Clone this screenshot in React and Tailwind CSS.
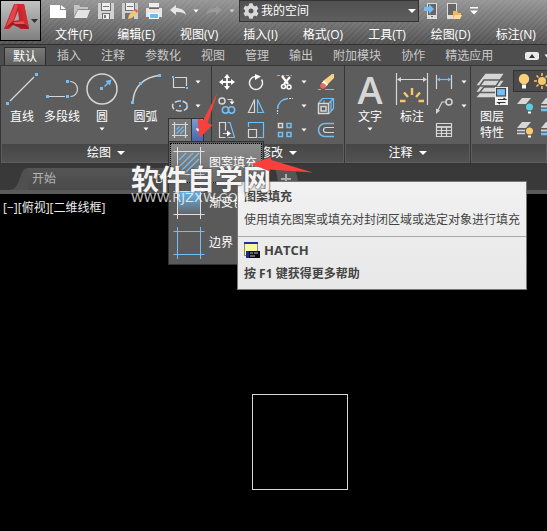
import React from 'react';
import { FaCog } from 'react-icons/fa';

const BLUE = '#73bff5';
const LIGHT = '#d6d6d6';

const menus = ['文件(F)', '编辑(E)', '视图(V)', '插入(I)', '格式(O)', '工具(T)', '绘图(D)', '标注(N)'];
const tabs = ['默认', '插入', '注释', '参数化', '视图', '管理', '输出', '附加模块', '协作', '精选应用'];

const Caret = ({ className = '' }) => (
  <svg viewBox="0 0 6 4" className={`w-[6px] h-[4px] shrink-0 ${className}`}>
    <path d="M0.500 0.500h5L3 3.500z" fill="#fff" />
  </svg>
);

/* 32px icons for the tall ribbon buttons */
const Big = ({ children }) => (
  <svg viewBox="0 0 32 32" className="w-8 h-8 overflow-visible" fill="none" stroke={LIGHT} strokeWidth="1.200">{children}</svg>
);

const Dot = ({ x, y, s = 3 }) => (
  <rect x={x - s / 2} y={y - s / 2} width={s} height={s} fill={BLUE} stroke="none" />
);

const LineIcon = () => (
  <Big><path d="M4 28L28 4" /><Dot x={1.500} y={30.500} /><Dot x={30.500} y={1.500} /></Big>
);
const PolylineIcon = () => (
  <Big>
    <path d="M3 23.500h16M24 8.500c4 0 7.500 3 7.500 7.500s-3 7.500-7 7.500" />
    <Dot x={1.500} y={23.500} /><Dot x={21.500} y={23.500} /><Dot x={21.500} y={8.500} />
  </Big>
);
const CircleIcon = () => (
  <Big>
    <circle cx="16" cy="16" r="15" strokeWidth="1.500" /><Dot x={15.500} y={15.500} />
    <path d="M18.500 13.500l4-4" stroke={BLUE} strokeWidth="1.500" /><path d="M25.500 6.500L24 12.500 19.500 8z" fill={BLUE} stroke="none" />
  </Big>
);
const ArcIcon = () => (
  <Big>
    <path d="M3 28C4 14 14 4 29 2.500" strokeWidth="1.500" /><Dot x={2.500} y={29.500} /><Dot x={10.500} y={10.500} /><Dot x={29.500} y={2.500} />
  </Big>
);
const TextIcon = () => (
  <span className="h-8 flex items-center font-['Open_Sans',sans-serif] font-semibold text-[38px] leading-8 text-[#d6d6d6]">A</span>
);
const DimIcon = () => (
  <Big>
    <path d="M0.500 0v32M31.500 0v32M2 6.500h28" />
    <path d="M1 6.500l4-2.500v5zM31 6.500l-4-2.500v5z" fill={LIGHT} stroke="none" />
    <path d="M4 28h5.500M8 19.500l4 4.500M16 15v7M24 19.500l-4 4.500M28 28h-5.500" stroke="#f8c96b" strokeWidth="2.400" />
  </Big>
);
const LayersIcon = () => (
  <Big>
    <g fill={LIGHT} stroke="#5d5d5d" strokeWidth="1.500">
      <path d="M-1 25L8 14h21l-9 11zM-1 19.500L8 7h21l-9 12.500zM-1 13L9 0h20l-9 13z" />
    </g>
    <rect x="19" y="14" width="13" height="18" fill="#f2f2f2" stroke="none" />
    <rect x="20.500" y="15.500" width="9" height="7.500" fill={BLUE} stroke="#444" />
    <path d="M22 26.500h7.500l-2-1.500M29.500 29.500H22l2 1.500" stroke="#333" />
  </Big>
);

/* 16px icons for the small ribbon buttons */
const Small = ({ children }) => (
  <svg viewBox="0 0 16 16" className="w-4 h-4 overflow-visible" fill="none" stroke={LIGHT} strokeWidth="1.200">{children}</svg>
);

const RectIcon = () => (
  <Small><path d="M1.500 4v9.500H13M3 3.500h11.500V12" /><Dot x={1} y={3} s={2} /><Dot x={15} y={14} s={2} /></Small>
);
const EllipseIcon = () => (
  <Small>
    <ellipse cx="8" cy="8" rx="7.500" ry="5" strokeDasharray="6 2" strokeWidth="1.500" />
    <Dot x={8} y={8} s={2} /><Dot x={15} y={8} s={2} /><Dot x={8} y={3} s={2} />
  </Small>
);
const HatchIcon = () => (
  <Small>
    <path d="M2.500 0v16M13.500 0v16M0 2.500h16M0 13.500h16" />
    <path d="M4.500 7.500l3-3M4.500 11.500l7-7M8 12l4-4" stroke={BLUE} />
  </Small>
);
const MoveIcon = () => (
  <Small>
    <path d="M8 2v12M2 8h12" stroke="#fff" strokeWidth="1.800" />
    <path d="M8 0l3 4H5zM8 16l3-4H5zM0 8l4-3v6zM16 8l-4-3v6z" fill="#fff" stroke="none" />
  </Small>
);
const RotateIcon = () => (
  <Small><path d="M7 2.500a6.500 6.500 0 1 0 6.500 3" strokeWidth="1.500" stroke="#eee" /><path d="M7 0l6 2.500L7 6z" fill="#fff" stroke="none" /></Small>
);
const TrimIcon = () => (
  <Small>
    <path d="M0 1.500h15" stroke={BLUE} strokeDasharray="3 1.500" />
    <path d="M5 2l6 8M13 3l-6 7" stroke="#fff" strokeWidth="2.200" />
    <circle cx="6.500" cy="12.500" r="2" stroke="#fff" strokeWidth="1.500" /><circle cx="12" cy="13" r="2" stroke="#fff" strokeWidth="1.500" />
  </Small>
);
const EraseIcon = () => (
  <Small>
    <path d="M0 15.500h3M7 15.500h9" stroke={BLUE} />
    <path d="M14 0h2v4L9 11 5 7z" fill="#fbd386" stroke="none" />
    <path d="M6 6.500l4 4-2.500 2.500-4-4z" fill="#fff" stroke="none" /><circle cx="5" cy="12" r="2.800" fill="#f0655e" stroke="none" />
  </Small>
);
const CopyIcon = () => (
  <Small>
    <circle cx="3" cy="3" r="3" strokeWidth="1.500" />
    <circle cx="6.500" cy="12" r="3.200" stroke={BLUE} strokeWidth="1.500" /><circle cx="12.500" cy="12" r="3.200" stroke={BLUE} strokeWidth="1.500" />
    <path d="M8.500 1.500h4.500V5" /><path d="M10.500 3.500h5L13 6.500z" fill="#fff" stroke="none" />
  </Small>
);
const MirrorIcon = () => (
  <Small><path d="M6.500 1.500v13h-6z" /><path d="M9.500 1.500v13h6z" stroke={BLUE} /></Small>
);
const FilletIcon = () => (
  <Small><path d="M0.500 11C1 5 5 1 11 0.500" stroke={BLUE} strokeWidth="1.500" /><path d="M12 0.500h4M0.500 12v4" strokeDasharray="2 1" /></Small>
);
const BoxIcon = () => (
  <Small>
    <path d="M0.500 5.500h10v10h-10zM3 8.500h5v4.500H3z" strokeWidth="1.500" />
    <path d="M0.500 5l4-4.500h11v10l-4.500 5M11 5l4.500-4.500M6 2.500v2.500M13 3v9.500" stroke={BLUE} />
  </Small>
);
const StretchIcon = () => (
  <Small>
    <path d="M6.500 15.500h-6V0.500h6v8M4 11.500h6" /><path d="M8 8.500l4 3-4 3z" fill="#fff" stroke="none" />
    <path d="M8.500 0.500h2.500l4.500 15H8.500" stroke={BLUE} />
  </Small>
);
const ScaleIcon = () => (
  <Small><path d="M0.500 5V0.500h15v15H10" stroke={BLUE} /><path d="M0.500 7.500h8v8h-8z" /></Small>
);
const ArrayIcon = () => (
  <Small>
    <path d="M1.500 1.500h4v4h-4z" strokeWidth="1.500" />
    <path d="M10 1.500h4v4h-4zM1.500 10.500h4v4h-4zM10 10.500h4v4h-4z" stroke={BLUE} strokeWidth="1.500" />
  </Small>
);
const OffsetIcon = () => (
  <Small><path d="M16 1.500H7a6.500 6.500 0 0 0 0 13h9" stroke={BLUE} strokeWidth="1.500" /><path d="M16 5.500H8a2.500 2.500 0 0 0 0 5h8" /></Small>
);
const LinearDimIcon = () => (
  <Small>
    <path d="M0.500 1v14M15.500 1v14" /><path d="M2 5.500h12" stroke={BLUE} />
    <path d="M1 5.500l3-2v4zM15 5.500l-3-2v4z" fill={BLUE} stroke="none" />
  </Small>
);
const LeaderIcon = () => (
  <Small><circle cx="13" cy="4" r="3" strokeWidth="1.500" /><path d="M10 4H6L2 12" /><path d="M0 16V10.500l4 2z" fill={LIGHT} stroke="none" /></Small>
);
const TableIcon = () => (
  <Small>
    <path d="M0.500 1.500h15v13h-15zM0.500 8.500h15M0.500 11.500h15M5.500 5v9M10.500 5v9" /><path d="M0.500 5h15" strokeWidth="1.800" />
  </Small>
);
const LayerStateIcon = ({ dot, stack }) => (
  <Small>
    <path d="M0 6l5-6h9l-5 6z" fill={LIGHT} stroke="none" />
    {stack && <path d="M0 8.500h8M0 11.500h8" strokeWidth="1.500" />}
    <circle cx="12.500" cy="9" r="3.500" fill={dot} stroke="none" />
    <path d="M12.500 13.500v2" stroke="#fff" strokeWidth="3" />
  </Small>
);
const LayerStackIcon = () => (
  <Small>
    <path d="M0 6l5-6h9l-5 6z" fill={LIGHT} stroke="none" /><path d="M0 8.500h9" strokeWidth="1.800" /><path d="M0 12h9" stroke={BLUE} strokeWidth="2.500" />
  </Small>
);
const BulbIcon = () => (
  <Small><circle cx="8" cy="6" r="5.200" fill="#fbd07a" stroke="none" /><path d="M8 11.500v4" stroke="#fff" strokeWidth="4" /></Small>
);
const SunIcon = () => (
  <Small>
    <circle cx="8" cy="8" r="4" fill="#f8c76d" stroke="none" />
    <path d="M8 0v3M8 13v3M0 8h3M13 8h3M2.500 2.500l2 2M11.500 11.500l2 2M2.500 13.500l2-2M11.500 4.500l2-2" stroke="#f8c76d" strokeWidth="1.500" />
  </Small>
);

const BigButton = ({ icon, label, caret, className }) => (
  <button type="button" className={`flex flex-col items-center text-xs leading-4 pt-[7px] ${className}`}>
    {icon}
    <span className="mt-1 whitespace-nowrap">{label}</span>
    {caret && <Caret className="mt-[2px]" />}
  </button>
);

const SmallButton = ({ icon, label }) => (
  <button type="button" aria-label={label} className="h-6 flex items-center justify-center">{icon}</button>
);

const CaretButton = ({ label }) => (
  <button type="button" aria-label={label} className="h-6 flex items-center justify-center"><Caret /></button>
);

const Panel = ({ title, children, className = '' }) => (
  <section className={`flex flex-col border-r border-[#363636] ${className}`}>
    <div className="h-[78px] flex">{children}</div>
    <h2 className="h-[18px] mx-px flex items-center justify-center gap-[6px] bg-linear-to-b from-[#464646] to-[#525252] text-xs">
      {title}
      {title && (
        <svg viewBox="0 0 8 4" className="w-2 h-1"><path d="M0 0h8L4 4z" fill="#fff" /></svg>
      )}
    </h2>
  </section>
);

const CornerLines = ({ color, children }) => (
  <svg viewBox="0 0 32 32" className="w-8 h-8 shrink-0" fill="none" stroke={color} strokeWidth="1">
    {children}
    <path d="M4.500 0v32M27.500 0v32M0.500 4.500h31M0.500 27.500h31" />
  </svg>
);

const HatchMenu = () => (
  <div role="menu" className="absolute z-10 -left-px top-full w-24 bg-[#5a5a5a] border border-[#333] p-px">
    <button type="button" role="menuitem" className="w-full h-10 pl-[2px] flex items-center gap-1 bg-linear-to-b from-[#8b8b8b] to-[#6b6b6b] border border-dotted border-black">
      <CornerLines color="#e0e0e0">
        <path d="M6 13l7-7M6 20L20 6M6 26L26 6M12 26l14-14M19 26l7-7" stroke={BLUE} strokeWidth="1.200" />
      </CornerLines>
      <span className="whitespace-nowrap">图案填充</span>
    </button>
    <button type="button" role="menuitem" className="w-full h-10 pl-[3px] flex items-center gap-1">
      <CornerLines color="#e0e0e0">
        <defs>
          <linearGradient id="sky" x1="0" y1="0" x2="0" y2="1">
            <stop offset="0" stopColor="#62b4ee" /><stop offset="1" stopColor="#666" />
          </linearGradient>
        </defs>
        <rect x="5" y="5" width="22" height="22" fill="url(#sky)" stroke="none" />
      </CornerLines>
      <span className="whitespace-nowrap">渐变色</span>
    </button>
    <button type="button" role="menuitem" className="w-full h-10 pl-[3px] flex items-center gap-1">
      <CornerLines color={BLUE} />
      <span className="whitespace-nowrap">边界</span>
    </button>
  </div>
);

const QuickAccess = () => (
  <div className="h-[22px] flex items-center">
    <div className="flex items-center gap-2 pl-[9px]">
      <button type="button" aria-label="新建">
        <svg viewBox="0 0 16 16" className="w-4 h-4"><path d="M0 2h10v5h6v8H0z" fill="#fff" /><path d="M11 2l5 4h-5z" fill="#fff" /></svg>
      </button>
      <button type="button" aria-label="打开">
        <svg viewBox="0 0 16 16" className="w-4 h-4"><path d="M0 13V2h5l1.500 2H14v2H4z" fill="#c4c4c4" /><path d="M4 7h12l-3 8H0z" fill="#e4e4e4" /></svg>
      </button>
      <button type="button" aria-label="保存">
        <svg viewBox="0 0 16 16" className="w-4 h-4"><path d="M0 0h16v16H0z" fill="#d2d2d2" /><path d="M3 0h10v8H3zM4 10h8v6H4z" fill="#707070" /><path d="M4 0h8v7H4zM5 11h6v5H5z" fill="#eee" /><path d="M6 12h2v3H6zM5 3h6v1H5z" fill="#777" /></svg>
      </button>
      <button type="button" aria-label="另存为">
        <svg viewBox="0 0 16 16" className="w-4 h-4">
          <path d="M0 0h16v16H0z" fill="#cfcfcf" /><path d="M3 0h10v8H3zM3 10h9v6H3z" fill="#707070" /><path d="M4 0h8v7H4z" fill="#eee" /><path d="M5 3h6v1H5z" fill="#777" />
          <path d="M6 16l1-4 5-5 3 3-5 5z" fill="#f5c76c" /><path d="M12 7l2-1 2 2-1 2z" fill="#ee5a50" />
        </svg>
      </button>
      <button type="button" aria-label="打印">
        <svg viewBox="0 0 16 16" className="w-4 h-4"><path d="M3 0h10v4H3z" fill="#eee" /><path d="M0 5h16v9H0z" fill="#e6e6e6" /><path d="M3 5h10v1H3z" fill="#666" /><path d="M3 10h10v6H3z" fill="#fff" /><path d="M4 11h8v4H4z" fill="#69bcf4" /></svg>
      </button>
      <button type="button" aria-label="放弃">
        <svg viewBox="0 0 16 16" className="w-4 h-4"><path d="M0 7l6-5v3c5 0 9 2 10 7-3-3-6-3-10-3v3z" fill="#e6e6e6" /></svg>
      </button>
    </div>
    <Caret className="ml-[7px]" />
    <button type="button" aria-label="重做" className="ml-[7px]">
      <svg viewBox="0 0 16 16" className="w-4 h-4"><path d="M16 7l-6-5v3C5 5 1 7 0 12c3-3 6-3 10-3v3z" fill="#9a9a9a" /></svg>
    </button>
    <Caret className="ml-[7px] opacity-60" />
    <button type="button" className="ml-1 w-[180px] h-[22px] flex items-center bg-linear-to-b from-[#505050] to-[#5e5e5e] border border-[#333] text-xs text-white">
      <FaCog className="w-4 h-4 ml-[3px] text-[#d8d8d8]" />
      <span className="ml-[2px]">我的空间</span>
      <svg viewBox="0 0 8 4" className="w-2 h-1 ml-auto mr-[2px]"><path d="M0 0h8L4 4z" fill="#fff" /></svg>
    </button>
    <button type="button" aria-label="发送到移动设备" className="ml-[5px]">
      <svg viewBox="0 0 14 16" className="w-[14px] h-4"><path d="M3 0h10v16H3z" fill="#ddd" /><path d="M4 1h8v11H4z" fill="#666" /><path d="M0 4h5V1l5 5-5 5V8H0z" fill={BLUE} /><path d="M7 13h2v1H7z" fill="#666" /></svg>
    </button>
    <button type="button" aria-label="从移动设备打开" className="ml-2">
      <svg viewBox="0 0 16 16" className="w-4 h-4"><path d="M1 0h10v16H1z" fill="#ddd" /><path d="M2 1h8v11H2z" fill="#666" /><path d="M7 8h4l1 2h3v2l-2 4H7z" fill="#f0b95c" /><path d="M9 12h7l-2 4H7z" fill="#ffdc96" /></svg>
    </button>
    <button type="button" aria-label="自定义快速访问工具栏" className="ml-2">
      <svg viewBox="0 0 8 8" className="w-2 h-2"><path d="M0 0h8v1.500H0zM0 3.500h8l-4 4z" fill="#fff" /></svg>
    </button>
  </div>
);

const Header = () => (
  <header className="flex h-11 overflow-hidden bg-[repeating-linear-gradient(135deg,transparent_0px,transparent_2px,#ffffff0d_2px,#ffffff0d_4px),linear-gradient(to_bottom,#959595,#525252)]">
    <button type="button" aria-label="应用程序菜单" className="w-[41px] h-[41px] shrink-0 flex items-center border border-black bg-linear-to-b from-[#c2c2c2] to-[#808080]">
      <svg viewBox="0 0 38 38" className="w-[38px] h-[38px]">
        <path d="M13 2h10l5 25h-9l-1-4h-6l-4 4H3z" fill="#c9252c" />
        <path d="M17 9l1 9-5 1z" fill="#aaa" />
        <path d="M14 2l3 1-5 17-8 7z" fill="#e0474a" />
        <path d="M3 27l9-8 13 1 3 7-9-1-7-3z" fill="#a01c22" />
        <path d="M12 20l12-1 2 3-12 0z" fill="#dc5a58" />
        <path d="M18 2h5l5 24-5-5z" fill="#cf2d32" />
        <path d="M30 17h7l-3.500 4z" fill="#2c3440" />
      </svg>
    </button>
    <div className="flex-1 whitespace-nowrap">
      <QuickAccess />
      <nav className="flex gap-[25px] pl-[14px] text-xs leading-4 pt-[5px] text-white">
        {menus.map((m) => <button type="button" key={m} className="shrink-0">{m}</button>)}
      </nav>
    </div>
  </header>
);

const Tabs = () => (
  <nav className="flex items-end h-[22px] pl-1 gap-[2px] bg-[#4e4e4e] border-t border-[#303030] border-b border-b-[#363636] text-xs whitespace-nowrap overflow-hidden">
    {tabs.map((t, i) => (
      <button
        type="button"
        key={t}
        className={i === 0
          ? 'h-[18px] px-2 border-x border-t border-[#2c2c2c] bg-linear-to-b from-[#7b7b7b] to-[#5d5d5d] text-white shrink-0'
          : 'h-[18px] px-[9px] text-[#c9c9c9] shrink-0'}
      >
        {t}
      </button>
    ))}
    <button type="button" aria-label="最小化面板" className="ml-[21px] mb-[5px] shrink-0">
      <svg viewBox="0 0 14 8" className="w-[14px] h-2"><rect width="14" height="8" rx="2" fill="#e8e8e8" /><path d="M4 6l3-4 3 4z" fill="#333" /></svg>
    </button>
    <Caret className="mb-[7px] ml-[3px]" />
  </nav>
);

const Ribbon = () => (
  <div className="flex h-[99px] bg-[#5d5d5d] border-l border-[#363636] border-b-2 border-b-[#363636] text-white text-xs">
    <Panel title="绘图" className="shrink-0">
      <BigButton icon={<LineIcon />} label="直线" className="w-[42px]" />
      <BigButton icon={<PolylineIcon />} label="多段线" className="w-[38px]" />
      <BigButton icon={<CircleIcon />} label="圆" caret className="w-[42px]" />
      <BigButton icon={<ArcIcon />} label="圆弧" caret className="w-[45px]" />
      <div className="w-[43px] pt-1">
        <div className="grid grid-cols-[24px_12px]">
          <SmallButton icon={<RectIcon />} label="矩形" />
          <CaretButton label="矩形选项" />
          <SmallButton icon={<EllipseIcon />} label="椭圆" />
          <CaretButton label="椭圆选项" />
        </div>
        <div className="relative flex w-9 h-6 border border-[#333]">
          <button type="button" aria-label="图案填充" className="flex-1 flex items-center justify-center bg-[#777]"><HatchIcon /></button>
          <button type="button" aria-label="图案填充选项" className="w-3 flex items-center justify-center border-l border-[#333] bg-linear-to-b from-[#7c9bd0] to-[#4668a6]"><Caret /></button>
          <HatchMenu />
        </div>
      </div>
    </Panel>
    <Panel title="修改" className="shrink-0">
      <div className="grid grid-cols-[30px_28px_30px_8px_36px] content-start pt-1">
        <SmallButton icon={<MoveIcon />} label="移动" />
        <SmallButton icon={<RotateIcon />} label="旋转" />
        <SmallButton icon={<TrimIcon />} label="修剪" />
        <CaretButton label="修剪选项" />
        <SmallButton icon={<EraseIcon />} label="删除" />
        <SmallButton icon={<CopyIcon />} label="复制" />
        <SmallButton icon={<MirrorIcon />} label="镜像" />
        <SmallButton icon={<FilletIcon />} label="圆角" />
        <CaretButton label="圆角选项" />
        <SmallButton icon={<BoxIcon />} label="分解" />
        <SmallButton icon={<StretchIcon />} label="拉伸" />
        <SmallButton icon={<ScaleIcon />} label="缩放" />
        <SmallButton icon={<ArrayIcon />} label="阵列" />
        <CaretButton label="阵列选项" />
        <SmallButton icon={<OffsetIcon />} label="偏移" />
      </div>
    </Panel>
    <Panel title="注释" className="shrink-0">
      <BigButton icon={<TextIcon />} label="文字" caret className="w-[50px]" />
      <BigButton icon={<DimIcon />} label="标注" className="w-[34px]" />
      <div className="grid grid-cols-[30px_10px] content-start pt-1 pr-px">
        <SmallButton icon={<LinearDimIcon />} label="线性" />
        <CaretButton label="线性选项" />
        <SmallButton icon={<LeaderIcon />} label="引线" />
        <CaretButton label="引线选项" />
        <SmallButton icon={<TableIcon />} label="表格" />
      </div>
    </Panel>
    <Panel title="" className="flex-1 min-w-0 overflow-hidden border-r-0">
      <BigButton
        icon={<LayersIcon />}
        label={<>图层<br />特性</>}
        className="w-[42px] shrink-0"
      />
      <div className="shrink-0 pt-1">
        <div className="flex items-center gap-[2px] w-32 h-[22px] mb-[2px] pl-[2px] border border-[#333] bg-[#4a4a4a]">
          <BulbIcon /><SunIcon />
        </div>
        <div className="grid grid-cols-[24px_24px]">
          <SmallButton icon={<LayerStateIcon dot="#58cfe0" />} label="关闭图层" />
          <SmallButton icon={<LayerStackIcon />} label="冻结图层" />
          <SmallButton icon={<LayerStateIcon dot="#fbcb6f" stack />} label="打开图层" />
          <SmallButton icon={<LayerStackIcon />} label="解冻图层" />
        </div>
      </div>
    </Panel>
  </div>
);

const FileTabs = () => (
  <div className="h-[29px] flex items-end bg-[#393939] border-b-4 border-[#5a5a5a] text-xs text-[#b5b5b5]">
    <svg viewBox="0 0 28 22" className="w-7 h-[22px] shrink-0">
      <path d="M9 22C22 22 18 0 28 0v22z" fill="#505050" />
    </svg>
    <button type="button" className="h-[22px] w-[126px] pl-1 text-left bg-linear-to-b from-[#555] to-[#4a4a4a]">开始</button>
    <button type="button" className="h-[22px] w-[112px] pl-px text-left bg-linear-to-b from-[#555] to-[#4a4a4a] text-white">Drawing1</button>
    <button type="button" aria-label="新图形" className="h-[22px]">
      <svg viewBox="0 0 40 22" className="w-10 h-[22px]">
        <path d="M8 0h18c6 0 6 22 10 22H16C11 22 12 2 8 0z" fill="#565656" /><path d="M20 6v10M15 11h10" stroke="#aaa" strokeWidth="2" />
      </svg>
    </button>
  </div>
);

const Tooltip = () => (
  <div role="tooltip" className="absolute z-20 left-[237px] top-[181px] border border-[#767676] bg-linear-to-b from-[#f1f1f1] to-[#e8e8e8] text-xs leading-4 text-[#444] whitespace-nowrap">
    <p className="px-[6px] pt-[7px] font-bold">图案填充</p>
    <p className="px-[6px] pt-[7px] pb-2">使用填充图案或填充对封闭区域或选定对象进行填充</p>
    <div className="border-t border-[#aaa] px-[6px] pt-[5px] pb-[7px] font-bold">
      <p className="flex items-center gap-1">
        <svg viewBox="0 0 16 16" className="w-4 h-4">
          <rect x="0.500" y="0.500" width="13" height="13" fill="#fbf7a0" stroke="#888" /><path d="M0 0h14v2H0z" fill="#1c2fa8" />
          <path d="M2 9h14v7H2z" fill="#0b0b14" /><path d="M2 9h3v7H2z" fill="#1a2a90" /><path d="M6 11h3M10 11h4M6 14h5" stroke="#bbb" />
        </svg>
        <span className="text-[13px]">HATCH</span>
      </p>
      <p className="mt-2">按 F1 键获得更多帮助</p>
    </div>
  </div>
);

const Watermark = () => (
  <div className="absolute z-30 left-[131px] top-[165px] pointer-events-none whitespace-nowrap text-[#f4f4f4]">
    <p className="text-[28px] leading-7 font-bold [text-shadow:0_0_2px_#444,0_0_2px_#555]">软件自学网</p>
    <p className="text-[13px] leading-[10px] font-['DejaVu_Sans',sans-serif] text-white/75">WWW.RJZXW.COM</p>
  </div>
);

const Arrows = () => (
  <svg viewBox="0 0 130 90" className="absolute z-30 left-[190px] top-[88px] w-[130px] h-[90px] pointer-events-none" fill="#f8403c">
    <path d="M27.500 4.500L13 32.500l-5.500-2L9.500 50l13-13-5-2z" />
    <path d="M61 76l20-7v3l42 12.500-44-3 1 2z" />
  </svg>
);

const Canvas = () => (
  <main className="flex-1 bg-black">
    <p className="pl-[3px] pt-[6px] text-xs leading-4 text-[#ececec]">[−][俯视][二维线框]</p>
    <svg viewBox="0 0 96 96" className="block w-24 h-24 mt-[178px] ml-[252px]">
      <rect x="0.500" y="0.500" width="95" height="95" fill="none" stroke="#d8d8d8" />
    </svg>
  </main>
);

const App = () => (
  <div className="relative min-h-screen flex flex-col overflow-hidden bg-black font-['Open_Sans','Noto_Sans_CJK_SC',sans-serif]">
    <Header />
    <Tabs />
    <Ribbon />
    <FileTabs />
    <Canvas />
    <Tooltip />
    <Watermark />
    <Arrows />
  </div>
);

export default App;
